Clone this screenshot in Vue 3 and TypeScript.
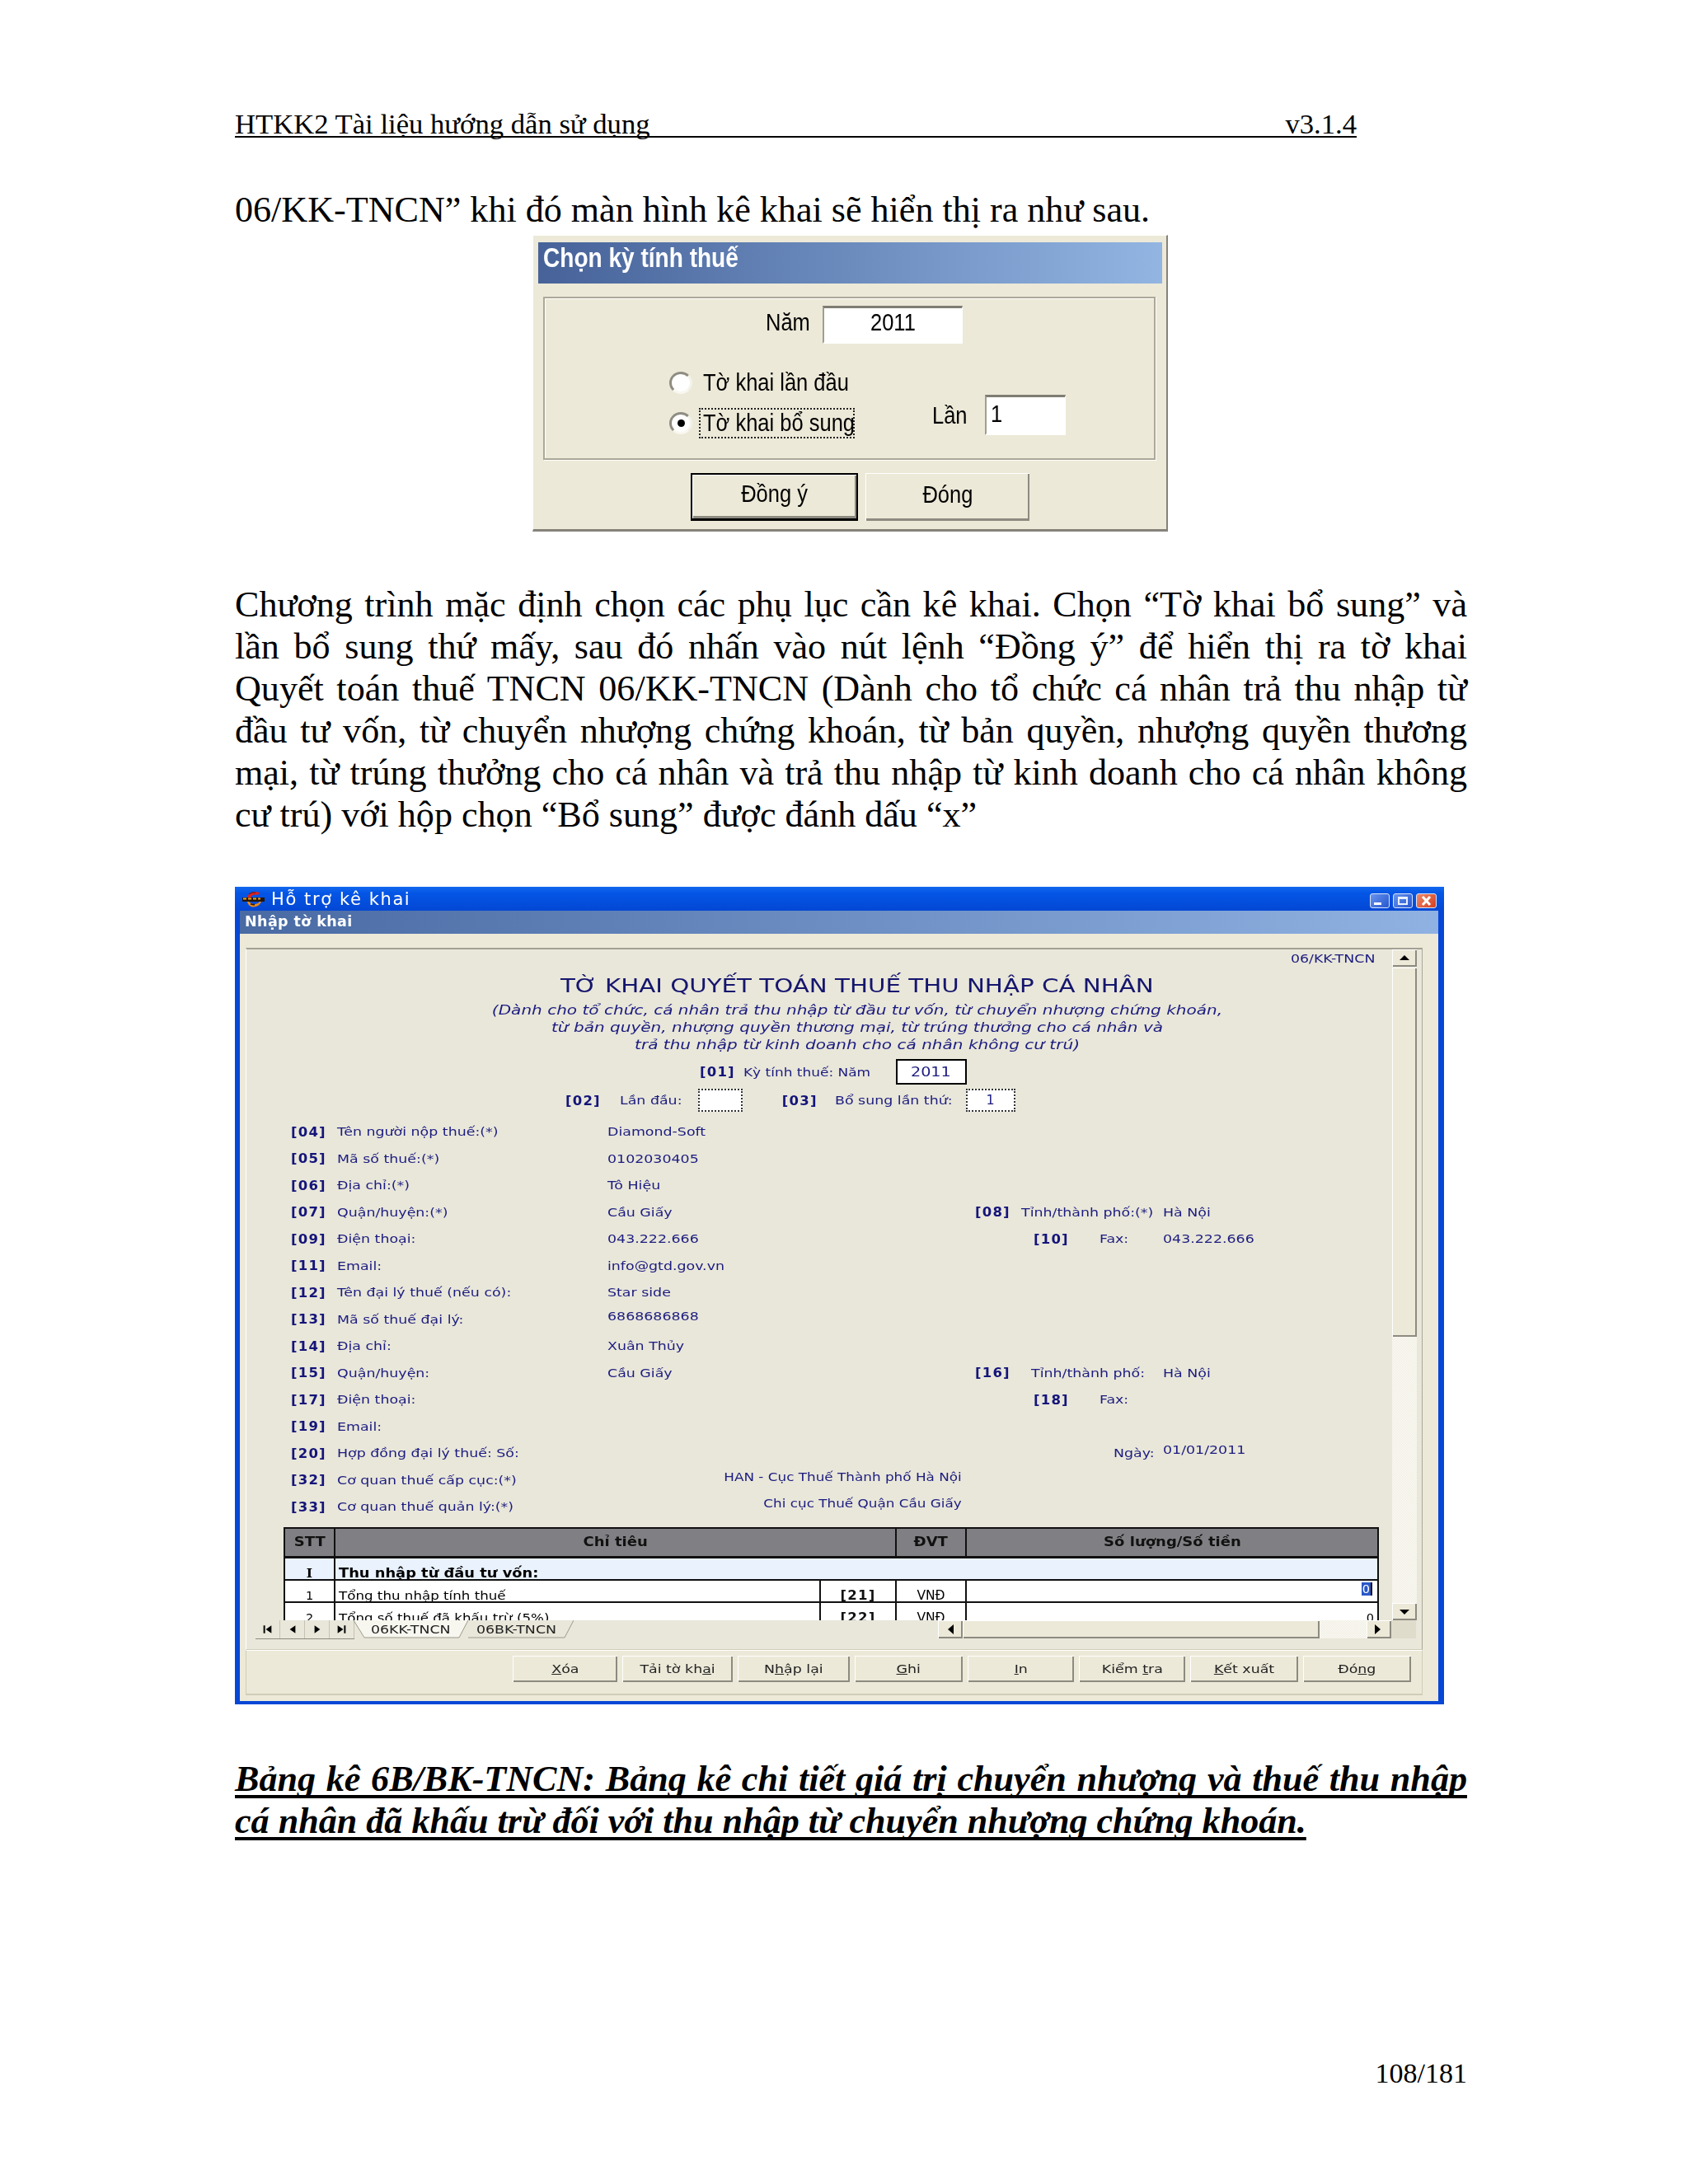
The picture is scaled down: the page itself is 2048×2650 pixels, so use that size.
<script setup lang="ts">
interface Side { kind: 'city' | 'city2' | 'fax' | 'date'; k?: string; l: string; v: string }
interface Row { k: string; l: string; v?: string; vc?: string; side?: Side }

const bodyLines: string[] = [
  'Chương trình mặc định chọn các phụ lục cần kê khai. Chọn “Tờ khai bổ sung” và',
  'lần bổ sung thứ mấy, sau đó nhấn vào nút lệnh “Đồng ý” để hiển thị ra tờ khai',
  'Quyết toán thuế TNCN 06/KK-TNCN (Dành cho tổ chức cá nhân trả thu nhập từ',
  'đầu tư vốn, từ chuyển nhượng chứng khoán, từ bản quyền, nhượng quyền thương',
  'mại, từ trúng thưởng cho cá nhân và trả thu nhập từ kinh doanh cho cá nhân không',
  'cư trú) với hộp chọn “Bổ sung” được đánh dấu “x”',
]

const rows: Row[] = [
  { k: '[04]', l: 'Tên người nộp thuế:(*)', v: 'Diamond-Soft' },
  { k: '[05]', l: 'Mã số thuế:(*)', v: '0102030405' },
  { k: '[06]', l: 'Địa chỉ:(*)', v: 'Tô Hiệu' },
  { k: '[07]', l: 'Quận/huyện:(*)', v: 'Cầu Giấy', side: { kind: 'city', k: '[08]', l: 'Tỉnh/thành phố:(*)', v: 'Hà Nội' } },
  { k: '[09]', l: 'Điện thoại:', v: '043.222.666', side: { kind: 'fax', k: '[10]', l: 'Fax:', v: '043.222.666' } },
  { k: '[11]', l: 'Email:', v: 'info@gtd.gov.vn' },
  { k: '[12]', l: 'Tên đại lý thuế (nếu có):', v: 'Star side' },
  { k: '[13]', l: 'Mã số thuế đại lý:', v: '6868686868', vc: 'up' },
  { k: '[14]', l: 'Địa chỉ:', v: 'Xuân Thủy' },
  { k: '[15]', l: 'Quận/huyện:', v: 'Cầu Giấy', side: { kind: 'city2', k: '[16]', l: 'Tỉnh/thành phố:', v: 'Hà Nội' } },
  { k: '[17]', l: 'Điện thoại:', side: { kind: 'fax', k: '[18]', l: 'Fax:', v: '' } },
  { k: '[19]', l: 'Email:' },
  { k: '[20]', l: 'Hợp đồng đại lý thuế: Số:', side: { kind: 'date', l: 'Ngày:', v: '01/01/2011' } },
  { k: '[32]', l: 'Cơ quan thuế cấp cục:(*)', v: 'HAN - Cục Thuế Thành phố Hà Nội', vc: 'end up' },
  { k: '[33]', l: 'Cơ quan thuế quản lý:(*)', v: 'Chi cục Thuế Quận Cầu Giấy', vc: 'end up' },
]

const actions: { pre: string; key: string; post: string; w: number }[] = [
  { pre: '', key: 'X', post: 'óa', w: 127 },
  { pre: 'Tải tờ kh', key: 'a', post: 'i', w: 134 },
  { pre: 'N', key: 'h', post: 'ập lại', w: 136 },
  { pre: '', key: 'G', post: 'hi', w: 131 },
  { pre: '', key: 'I', post: 'n', w: 129 },
  { pre: 'Kiểm ', key: 't', post: 'ra', w: 129 },
  { pre: '', key: 'K', post: 'ết xuất', w: 131 },
  { pre: 'Đó', key: 'n', post: 'g', w: 131 },
]
</script>

<template>
  <div class="page">
    <header class="doc-head"><span>HTKK2 Tài liệu hướng dẫn sử dụng</span><span>v3.1.4</span></header>
    <p class="intro">06/KK-TNCN” khi đó màn hình kê khai sẽ hiển thị ra như sau.</p>

    <section class="dlg">
      <div class="dlg-title"><span class="narrow">Chọn kỳ tính thuế</span></div>
      <div class="dlg-group">
        <div class="year-row"><span class="lbl year-lbl"><span class="narrow">Năm</span></span><div class="sunk year"><span class="narrow">2011</span></div></div>
        <div class="choice-row">
          <div class="radios">
            <div class="radio-line"><i class="radio"></i><span class="radio-text"><span class="narrow">Tờ khai lần đầu</span></span></div>
            <div class="radio-line"><i class="radio on"></i><span class="radio-text focus"><span class="narrow">Tờ khai bổ sung</span></span></div>
          </div>
          <div class="times"><span class="lbl times-lbl"><span class="narrow">Lần</span></span><div class="sunk times-box"><span class="narrow">1</span></div></div>
        </div>
      </div>
      <div class="dlg-actions">
        <button class="dlg-btn primary"><span class="narrow c">Đồng ý</span></button>
        <button class="dlg-btn"><span class="narrow c">Đóng</span></button>
      </div>
    </section>

    <div class="para">
      <p v-for="(line, i) in bodyLines" :key="i" :class="{ last: i === bodyLines.length - 1 }">{{ line }}</p>
    </div>

    <section class="win">
      <div class="win-title">
        <svg class="app-icon" viewBox="0 0 28 20" width="28" height="20">
          <path d="M6 8 Q8 1 16 1 L21 2 L19 5 Q12 3 10 8 Z" fill="#e0201a" />
          <path d="M8 4 Q12 1 16 2" stroke="#5a1410" stroke-width="1" fill="none" />
          <rect x="0" y="8" width="27" height="5" fill="#241608" />
          <path d="M1 9.5 H5 M7 9.5 H11 M13 9.5 H17 M19 9.5 H22" stroke="#f2a51e" stroke-width="2" />
          <path d="M8 13 Q12 18 19 15 L21 13 H23 Q20 20 12 19.5 Q7 18 6 13 Z" fill="#ee8a1a" />
          <path d="M10 16 L15 17" stroke="#2a1a0a" stroke-width="1.5" />
        </svg>
        <span class="win-name">Hỗ trợ kê khai</span>
        <div class="ctrls">
          <div class="ctrl"><svg viewBox="0 0 22 16"><rect x="4" y="10" width="9" height="3" fill="#fff" /></svg></div>
          <div class="ctrl"><svg viewBox="0 0 22 16"><path d="M5 3 H17 V13 H5 Z M7 6 V11 H15 V6 Z" fill="#e8f0ff" fill-rule="evenodd" /></svg></div>
          <div class="ctrl close"><svg viewBox="0 0 23 16"><path d="M7 3 L16 13 M16 3 L7 13" stroke="#fff" stroke-width="3" /></svg></div>
        </div>
      </div>
      <div class="sub-title"><span class="sub-text">Nhập tờ khai</span></div>
      <div class="win-body">
        <div class="frame">
          <div class="frame-top">
            <div class="content">
              <div class="form-code"><span>06/KK-TNCN</span></div>
              <h1 class="form-title">TỜ KHAI QUYẾT TOÁN THUẾ THU NHẬP CÁ NHÂN</h1>
              <div class="form-sub">
                <div>(Dành cho tổ chức, cá nhân trả thu nhập từ đầu tư vốn, từ chuyển nhượng chứng khoán,</div>
                <div>từ bản quyền, nhượng quyền thương mại, từ trúng thưởng cho cá nhân và</div>
                <div>trả thu nhập từ kinh doanh cho cá nhân không cư trú)</div>
              </div>
              <div class="period">
                <b class="k">[01]</b><span class="period-label"><span class="wide-t">Kỳ tính thuế: Năm</span></span><div class="period-box"><span class="wide-t c">2011</span></div>
              </div>
              <div class="kind">
                <b class="k">[02]</b><span class="kind-a"><span class="wide-t">Lần đầu:</span></span><div class="dotted first"></div>
                <b class="k k3">[03]</b><span class="kind-b"><span class="wide-t">Bổ sung lần thứ:</span></span><div class="dotted second">1</div>
              </div>
              <div class="rows">
                <div v-for="r in rows" :key="r.k" class="row">
                  <b class="k">{{ r.k }}</b>
                  <span class="wide-t">{{ r.l }}</span>
                  <span class="val wide-t" :class="r.vc">{{ r.v }}</span>
                  <div v-if="r.side" class="side" :class="r.side.kind">
                    <b v-if="r.side.k" class="k">{{ r.side.k }}</b>
                    <span class="side-label"><span class="wide-t">{{ r.side.l }}</span></span>
                    <span class="wide-t" :class="{ up: r.side.kind === 'date' }">{{ r.side.v }}</span>
                  </div>
                </div>
              </div>
              <div class="tbl">
                <div class="tr head">
                  <div><span class="wide-t c">STT</span></div><div><span class="wide-t c">Chỉ tiêu</span></div><div><span class="wide-t c">ĐVT</span></div><div><span class="wide-t c">Số lượng/Số tiền</span></div>
                </div>
                <div class="tr group">
                  <div class="serif">I</div><div class="span3"><span class="tbl-t">Thu nhập từ đầu tư vốn:</span></div>
                </div>
                <div class="tr line">
                  <div>1</div><div class="left"><span class="tbl-t">Tổng thu nhập tính thuế</span></div><div class="k">[21]</div><div class="unit">VNĐ</div>
                  <div class="amount"><span class="sel">0</span></div>
                </div>
                <div class="tr line clip">
                  <div>2</div><div class="left"><span class="tbl-t">Tổng số thuế đã khấu trừ (5%)</span></div><div class="k">[22]</div><div class="unit">VNĐ</div>
                  <div class="amount low">0</div>
                </div>
              </div>
            </div>
            <div class="vbar">
              <div class="sb-btn"><svg viewBox="0 0 30 21" width="30" height="21"><path d="M9 13 L15 7 L21 13 Z" /></svg></div>
              <div class="sb-thumb v"></div>
              <div class="hatch"></div>
              <div class="sb-btn"><svg viewBox="0 0 30 21" width="30" height="21"><path d="M9 8 L21 8 L15 14 Z" /></svg></div>
            </div>
          </div>
          <div class="tabbar">
            <div class="navs">
              <div class="nav"><svg viewBox="0 0 30 22"><path d="M10 6 H12 V16 H10 Z M20 6 V16 L13 11 Z" /></svg></div>
              <div class="nav"><svg viewBox="0 0 30 22"><path d="M19 6 V16 L12 11 Z" /></svg></div>
              <div class="nav"><svg viewBox="0 0 30 22"><path d="M12 6 V16 L19 11 Z" /></svg></div>
              <div class="nav"><svg viewBox="0 0 30 22"><path d="M10 6 V16 L17 11 Z M18 6 H20 V16 H18 Z" /></svg></div>
            </div>
            <div class="tab active">
              <svg class="tab-shape" viewBox="0 0 139 22"><path d="M0 0 L13 21 H128 L139 0" fill="#f7f6ef" stroke="#9c9a8c" /></svg>
              <span class="wide-t c">06KK-TNCN</span>
            </div>
            <div class="tab">
              <svg class="tab-shape" viewBox="0 0 139 22"><path d="M11 21 H128 L139 0" fill="none" stroke="#9c9a8c" /></svg>
              <span class="wide-t c">06BK-TNCN</span>
            </div>
            <div class="tab-fill"></div>
            <div class="hbar">
              <div class="sb-btn h"><svg viewBox="0 0 30 22" width="30" height="22"><path d="M19 5 V17 L12 11 Z" /></svg></div>
              <div class="sb-thumb"></div>
              <div class="hatch"></div>
              <div class="sb-btn h"><svg viewBox="0 0 28 22" width="28" height="22"><path d="M10 5 V17 L17 11 Z" /></svg></div>
            </div>
            <div class="corner"></div>
          </div>
        </div>
        <div class="actions">
          <button v-for="a in actions" :key="a.pre + a.key" class="act" :style="{ width: a.w + 'px' }"><span class="wide-t c">{{ a.pre }}<u>{{ a.key }}</u>{{ a.post }}</span></button>
        </div>
      </div>
    </section>

    <h2 class="head2">
      <span class="just">Bảng kê 6B/BK-TNCN: Bảng kê chi tiết giá trị chuyển nhượng và thuế thu nhập</span>
      <span class="plain">cá nhân đã khấu trừ đối với thu nhập từ chuyển nhượng chứng khoán.</span>
    </h2>
    <footer class="pageno">108/181</footer>
  </div>
</template>

<style>
html, body { margin: 0; background: #fff; }
</style>

<style scoped>
.page {
  width: 2048px;
  height: 2650px;
  box-sizing: border-box;
  padding: 130px 268px 0 285px;
  background: #fff;
  color: #000;
  font-family: "Liberation Serif", serif;
  overflow: hidden;
}
p, h1, h2 { margin: 0; font-weight: normal; }
button { font: inherit; color: inherit; padding: 0; }

.doc-head {
  display: flex;
  justify-content: space-between;
  width: 1361px;
  height: 35px;
  line-height: 40px;
  font-size: 34.65px;
  border-bottom: 2px solid #000;
}
.intro { margin-top: 63px; height: 50px; line-height: 50px; font-size: 44.1px; white-space: nowrap; }

/* dialog: the source picture is stretched upright, hence the narrowed glyphs */
.narrow { display: inline-block; transform: scaleX(0.85); transform-origin: left center; white-space: nowrap; }
.narrow.c { transform-origin: center; }
.dlg {
  margin: 5px 0 0 361px;
  width: 771px;
  height: 360px;
  box-sizing: border-box;
  padding: 8px 5px 0 6px;
  background: #ece9d8;
  border-top: 1px solid #fff;
  border-left: 1px solid #fff;
  border-right: 2px solid #85837a;
  border-bottom: 3px solid #85837a;
  font-family: "Liberation Sans", sans-serif;
  font-size: 30px;
  display: flex;
  flex-direction: column;
}
.dlg-title {
  height: 50px;
  line-height: 38px;
  padding-left: 6px;
  flex: none;
  color: #fff;
  font-weight: bold;
  font-size: 33px;
  background: linear-gradient(90deg, #466299, #92b5e2);
}
.dlg-group {
  margin: 16px 8px 0 6px;
  height: 198px;
  flex: none;
  box-sizing: border-box;
  border: 2px solid #aca899;
  box-shadow: inset 1px 1px 0 #fff, 1px 1px 0 #fff;
  padding-top: 9px;
}
.year-row { display: flex; align-items: center; padding-left: 268px; gap: 17px; height: 46px; }
.lbl { flex: none; display: block; white-space: nowrap; }
.year-lbl { width: 52px; margin-bottom: 6px; }
.times-lbl { width: 43px; }
.sunk {
  background: #fff;
  box-sizing: border-box;
  border-top: 3px solid #7f7d72;
  border-left: 2px solid #a09e92;
  border-right: 1px solid #fff;
  border-bottom: 2px solid #fff;
}
.year { width: 170px; height: 46px; line-height: 34px; padding-left: 56px; }
.choice-row { display: flex; margin-top: 29px; padding-left: 151px; }
.radios { width: 319px; flex: none; }
.radio-line { display: flex; align-items: center; height: 37px; margin-bottom: 12px; }
.radio {
  width: 28px; height: 27px; flex: none; box-sizing: border-box;
  border-radius: 50%;
  background: #fff;
  border: 3px solid;
  border-color: #8f8d82 #f4f3ea #f8f7f0 #8f8d82;
  display: flex; align-items: center; justify-content: center;
  margin-right: 8px;
}
.radio.on::after { content: ""; width: 9px; height: 9px; background: #000; border-radius: 50%; }
.radio-text { padding: 0 3px; box-sizing: border-box; width: 189px; border: 2px solid transparent; height: 37px; line-height: 32px; white-space: nowrap; }
.radio-text.focus { border: 2px dotted #222; }
.times { display: flex; align-items: center; gap: 21px; height: 49px; margin-top: 33px; }
.times-box { width: 98px; height: 49px; line-height: 40px; padding-left: 5px; }
.dlg-actions { display: flex; gap: 9px; padding-left: 185px; margin-top: 16px; }
.dlg-btn {
  width: 199px; height: 58px;
  padding-bottom: 7px;
  background: #ece9d8;
  border: none;
  box-shadow: inset 1px 1px 0 #fff, inset -2px -3px 0 #8d8b80;
}
.dlg-btn.primary {
  width: 203px;
  border: 2px solid #000;
  border-bottom-width: 3px;
  box-shadow: inset 1px 1px 0 #fff, inset -2px -3px 0 #8d8b80;
}

.para { margin-top: 63px; font-size: 44.1px; line-height: 51px; }
.para p { text-align: justify; text-align-last: justify; white-space: nowrap; }
.para p.last { text-align-last: left; }

/* main window: the source picture is stretched sideways, hence the widened glyphs */
.wide-t { display: inline-block; transform: scaleX(1.2); transform-origin: left center; white-space: nowrap; }
.wide-t.c { transform-origin: center; }
.win {
  margin: 62px 0 0 0;
  width: 1467px;
  height: 992px;
  box-sizing: border-box;
  padding: 0 7px 4px 6px;
  background: #0747d6;
  border-radius: 7px 7px 0 0;
  display: flex;
  flex-direction: column;
  font-family: "DejaVu Sans", sans-serif;
  font-size: 14.5px;
  color: #1c1c80;
  filter: blur(0.35px);
}
.win-title {
  height: 29px;
  margin: 0 -7px 0 -6px;
  padding: 0 9px 0 9px;
  display: flex;
  align-items: center;
  flex: none;
  background: linear-gradient(180deg, #1268ee 0%, #0556e6 25%, #0347d4 100%);
  color: #fff;
  font-size: 21px;
  font-weight: 500;
}
.app-icon { margin-right: 7px; flex: none; }
.win-name { flex: 1; letter-spacing: 1.6px; }
.ctrls { display: flex; gap: 4px; margin-top: 4px; }
.ctrl {
  width: 24px; height: 18px;
  border: 1px solid #d8e4fa;
  box-sizing: border-box;
  border-radius: 3px;
  background: linear-gradient(135deg, #6a93ee, #2557cf);
}
.ctrl.close { background: linear-gradient(135deg, #ee8a6c, #d53e1e); width: 25px; }
.ctrl svg { display: block; width: 100%; height: 100%; }
.sub-title {
  height: 28px;
  line-height: 27px;
  padding-left: 6px;
  flex: none;
  background: linear-gradient(90deg, #496aa3, #8fb2e2);
  color: #fff;
  font-weight: bold;
  font-size: 17.5px;
}
.sub-text { letter-spacing: 0.4px; }
.win-body {
  flex: 1;
  min-height: 0;
  background: #ece9d8;
  padding: 17px 19px 0 7px;
  display: flex;
  flex-direction: column;
}
.frame {
  height: 852px;
  flex: none;
  box-sizing: border-box;
  border-top: 2px solid #a3a194;
  border-left: 1px solid #fff;
  border-right: 1px solid #aca899;
  border-bottom: 1px solid #cfccba;
  background: #e9e7d9;
  display: flex;
  flex-direction: column;
}
.frame-top { display: flex; height: 814px; flex: none; padding-right: 6px; }
.content { flex: 1; min-width: 0; overflow: hidden; }
.form-code { height: 24px; line-height: 22px; text-align: right; padding-right: 21px; white-space: nowrap; }
.form-code span { display: inline-block; transform: scaleX(1.2); transform-origin: right center; }
.form-title {
  height: 40px;
  line-height: 40px;
  text-align: center;
  padding-left: 90px;
  font-family: "DejaVu Sans", sans-serif;
  font-size: 23px;
  color: #15156e;
  white-space: nowrap;
  transform: scaleX(1.274);
  transform-origin: 737px 50%;
}
.form-sub {
  padding-left: 90px;
  text-align: center;
  font-style: italic;
  line-height: 21px;
  font-size: 15px;
  white-space: nowrap;
  transform: scaleX(1.336);
  transform-origin: 737px 50%;
}
.k { font-weight: bold; font-size: 16.5px; letter-spacing: 1.2px; color: #14147a; white-space: nowrap; }
.period { display: flex; align-items: center; margin-top: 6px; height: 31px; padding-left: 550px; }
.period-label { width: 185px; margin-left: 10px; flex: none; box-sizing: border-box; }
.period-label .wide-t { transform: scaleX(1.17); }
.period-box {
  width: 86px; height: 31px; box-sizing: border-box;
  background: #fff; border: 2px solid #000;
  text-align: center; line-height: 27px; font-size: 16px;
}
.kind { display: flex; align-items: center; margin-top: 5px; height: 28px; padding-left: 387px; }
.kind-a { margin-left: 23px; width: 95px; flex: none; }
.dotted { height: 28px; background: #fff; box-sizing: border-box; border: 2px dotted #333; text-align: center; line-height: 24px; font-size: 16px; flex: none; }
.dotted.first { width: 54px; }
.dotted.second { width: 60px; }
.k3 { margin-left: 48px; }
.kind-b { margin-left: 21px; width: 159px; flex: none; }

.rows { margin-top: 8px; padding-left: 54px; }
.row {
  display: grid;
  grid-template-columns: 56px 328px 446px 1fr;
  align-items: center;
  height: 32.5px;
  white-space: nowrap;
}
.up { margin-bottom: 8px; }
.val.end { text-align: right; padding-right: 14px; transform-origin: right center; transform: scaleX(1.16); }
.side { display: grid; align-items: center; }
.side.city, .side.city2 { grid-template-columns: 56px 172px auto; }
.side.city2 .side-label { padding-left: 12px; }
.side.fax { padding-left: 71px; grid-template-columns: 80px 77px auto; }
.side.date { padding-left: 168px; grid-template-columns: 60px auto; }

.tbl { margin: 8px 0 0 45px; width: 1329px; color: #000; font-size: 14.5px; border-left: 2px solid #111; border-right: 2px solid #111; box-sizing: border-box; }
.tr { display: grid; box-sizing: border-box; grid-template-columns: 61px 589px 92px 85px 1fr; }
.tr > div { text-align: center; white-space: nowrap; box-sizing: border-box; border-right: 2px solid #111; }
.tr > div:last-child { border-right: none; }
.head {
  grid-template-columns: 61px 681px 85px 1fr;
  height: 38px;
  line-height: 33px;
  background: #808084;
  border-top: 2px solid #111;
  border-bottom: 3px solid #111;
  font-weight: bold;
  color: #111;
  font-size: 15px;
}
.group {
  grid-template-columns: 61px 1fr;
  height: 27px;
  line-height: 36px;
  background: #e9f2fd;
  border-bottom: 2px solid #111;
  font-weight: bold;
  font-size: 15.5px;
}
.group .span3 { text-align: left; padding-left: 4px; overflow: hidden; }
.tbl-t { display: inline-block; transform: scaleX(1.15); transform-origin: left center; }
.serif { font-family: "DejaVu Serif", serif; }
.line { height: 27px; line-height: 37px; background: #fff; border-bottom: 2px solid #111; }
.line .left { text-align: left; padding-left: 4px; }
.line .k { color: #111; line-height: 35px; }
.line .unit { font-size: 15.5px; }
.line > div { overflow: hidden; }
.line.clip { height: 23px; border-bottom: none; line-height: 36px; overflow: hidden; }
.amount { text-align: right !important; padding-right: 6px; line-height: 17px; padding-top: 2px; }
.amount.low { line-height: 32px; padding-top: 2px; padding-right: 4px; }
.sel { background: #2a58c8; color: #fff; padding: 0 1px; display: inline-block; height: 16px; border-right: 2px solid #111; }

.vbar { width: 30px; flex: none; display: flex; flex-direction: column; }
.sb-btn {
  height: 21px; flex: none;
  background: #ece9d8;
  box-shadow: inset 1px 1px 0 #fff, inset -2px -2px 0 #8d8b80;
}
.sb-btn svg { display: block; fill: #000; }
.sb-thumb { background: #ece9d8; box-shadow: inset 1px 1px 0 #fff, inset -2px -2px 0 #8d8b80; }
.sb-thumb.v { height: 448px; flex: none; margin-top: 1px; }
.hatch { flex: 1; background: repeating-conic-gradient(#ece9d8 0 25%, #fff 0 50%) 0 0 / 2px 2px; }

.tabbar { display: flex; height: 22px; flex: none; padding-left: 11px; font-size: 14.5px; color: #222; align-items: stretch; }
.navs { display: flex; width: 119px; flex: none; box-shadow: 0 1px 0 #aca899; }
.nav { width: 30px; flex: none; box-sizing: border-box; border-right: 1px solid #c6c3b3; box-shadow: 0 1px 0 #8d8b80; }
.nav svg { display: block; width: 100%; height: 100%; fill: #000; }
.tab { position: relative; width: 139px; text-align: center; line-height: 22px; flex: none; white-space: nowrap; }
.tab + .tab { margin-left: -11px; }
.tab-shape { position: absolute; inset: 0; width: 100%; height: 100%; }
.tab .wide-t { position: relative; }
.tab-fill { flex: 1; }
.hbar { width: 550px; display: flex; flex: none; }
.sb-btn.h { width: 30px; height: 22px; }
.hbar .sb-thumb { width: 433px; flex: none; }
.corner { width: 30px; flex: none; margin-right: 7px; background: #dfdccb; }

.actions {
  display: flex;
  gap: 6px;
  justify-content: flex-end;
  height: 55px;
  box-sizing: border-box;
  padding: 6px 13px 0 0;
  border-left: 1px solid #cfccba;
  border-right: 1px solid #cfccba;
  border-bottom: 2px solid #cfccba;
  border-top: 1px solid #fff;
}
.act {
  height: 32px;
  font-family: "DejaVu Sans", sans-serif;
  font-size: 14.5px;
  color: #222;
  background: #ece9d8;
  border: none;
  white-space: nowrap;
  box-shadow: inset 1px 1px 0 #fff, inset -2px -2px 0 #8d8b80;
}

.head2 {
  margin-top: 64.5px;
  font-size: 44.1px;
  line-height: 51px;
  font-style: italic;
  font-weight: bold;
}
.head2 span {
  display: block;
  text-decoration: underline;
  text-decoration-thickness: 4px;
  text-underline-offset: 5px;
  text-decoration-skip-ink: none;
  white-space: nowrap;
}
.head2 .just { text-align: justify; text-align-last: justify; }
.pageno { margin-top: 256px; text-align: right; font-size: 34px; line-height: 50px; }
</style>
